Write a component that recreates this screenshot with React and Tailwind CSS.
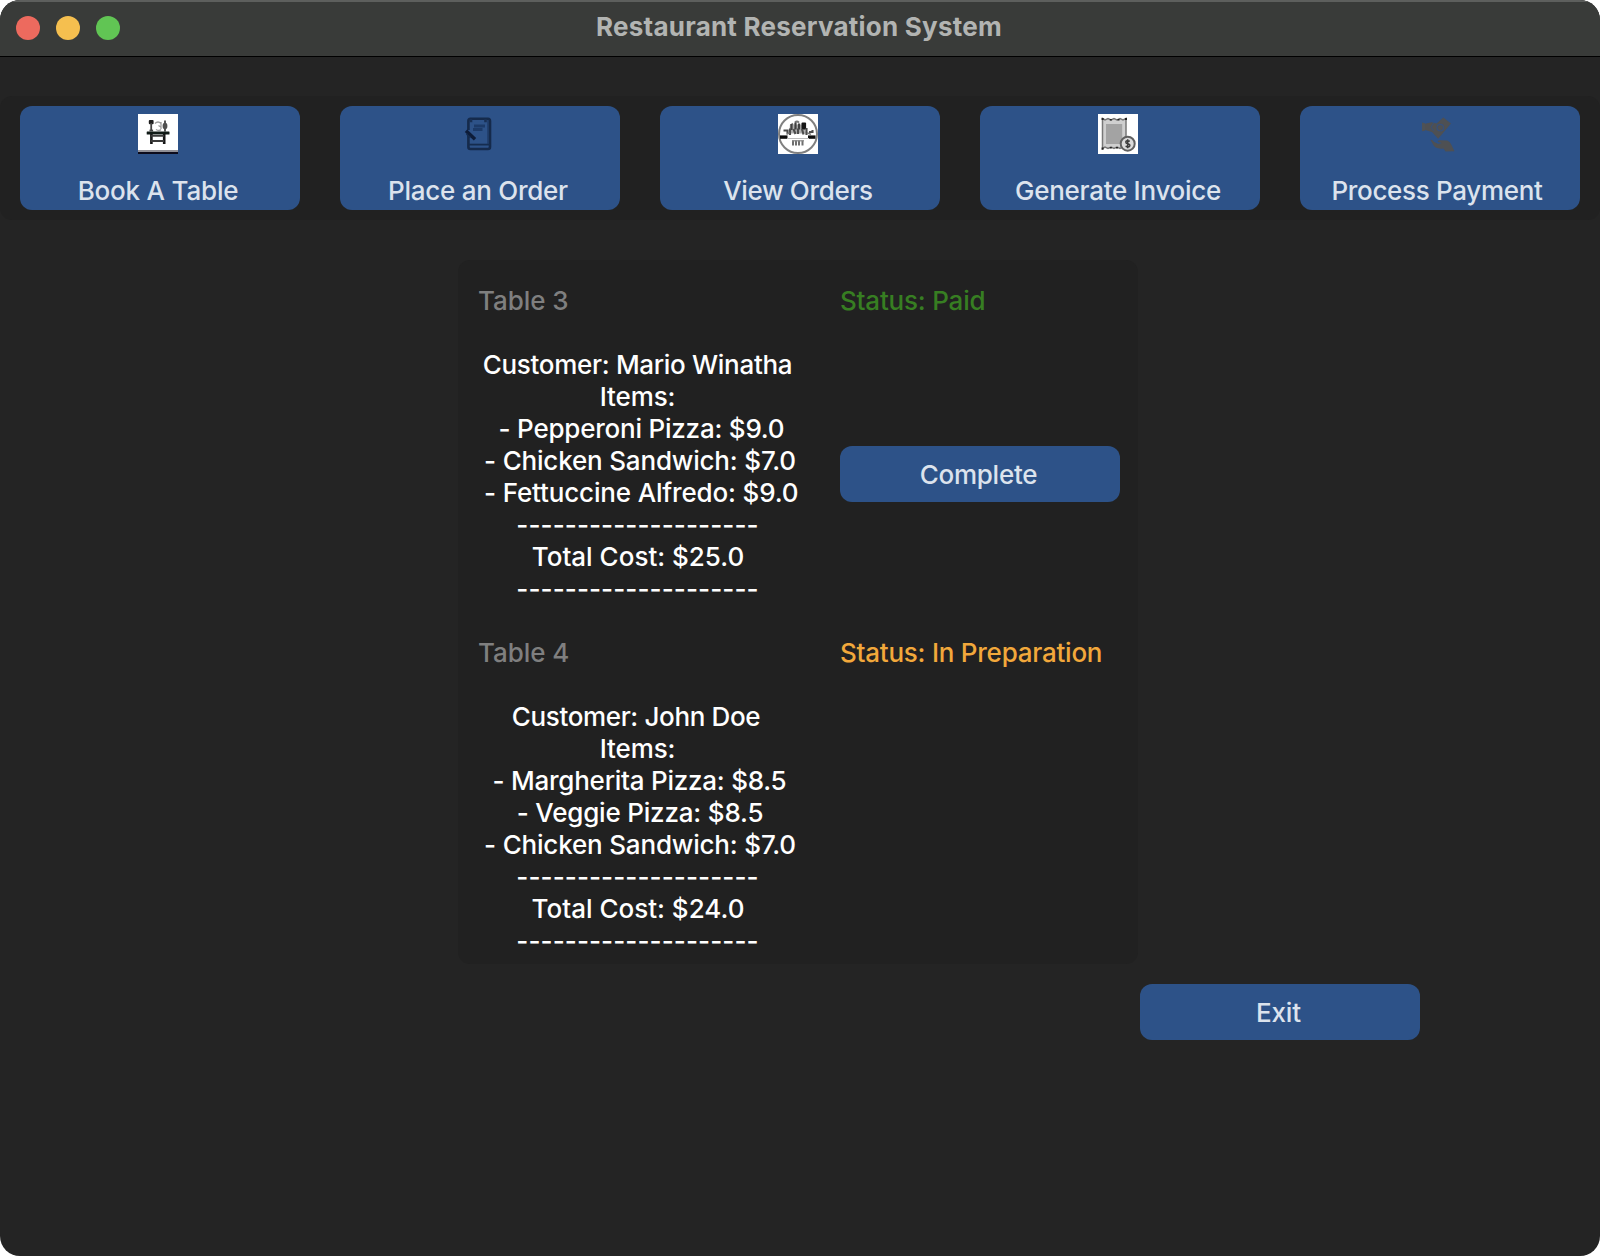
function TableIcon() {
  return (
    <svg width="40" height="40" viewBox="0 0 40 40">
      <rect width="40" height="40" fill="#fff" />
      <rect y="36" width="40" height="2" fill="#8f8f96" />
      <rect y="38" width="40" height="2" fill="#0c0b1c" />
      <g className="blur-[0.5px]">
        <rect x="10.8" y="6" width="4.8" height="4.2" rx="1" fill="#1e1e1e" />
        <path d="M13.2 9v7" stroke="#444" strokeWidth="1.8" />
        <path d="M11.5 16.5h3.6" stroke="#444" strokeWidth="1.8" />
        <path d="M27 6.5v11" stroke="#444" strokeWidth="1.8" />
        <ellipse cx="27" cy="12" rx="2.4" ry="3.2" fill="#505050" />
        <path d="M17 9.5q3-3 6 0M23 8v7M18 15.5q3 2 5 0M20.5 11.5l3 2" stroke="#9d9d9d" strokeWidth="1.3" fill="none" />
        <rect x="8.700" y="17.500" width="22.800" height="3" rx="0.5" fill="#101a16" />
        <path d="M13.400 20v10M26.200 20v10" stroke="#161616" strokeWidth="2.600" />
        <path d="M13 21.800h13M13 27h13" stroke="#3a3a3a" strokeWidth="1.800" />
      </g>
    </svg>
  );
}

function OrderIcon() {
  return (
    <svg className="blur-[0.5px]" width="40" height="40" viewBox="0 0 40 40" fill="none">
      <path d="M10.400 16V7q0-2.200 2-2.200H30q2 0 2 2.200v26q0 2-2 2H12.400q-2 0-2-2V19" stroke="#152a4b" strokeWidth="2.600" />
      <path d="M11 30.600h21" stroke="#152c4f" strokeWidth="1.800" />
      <path d="M30 6v24" stroke="#1c365f" strokeWidth="1.200" />
      <path d="M13 5v3.200M27.500 5v3.200" stroke="#183055" strokeWidth="2.600" />
      <path d="M16 12h11M15 15.400h9.500" stroke="#1c3a68" strokeWidth="3" />
      <path d="M8 16.800l9 8.400" stroke="#0d1c38" strokeWidth="3.400" />
      <path d="M8.500 19.500q1 2.500 4 4" stroke="#152c4f" strokeWidth="1.600" />
    </svg>
  );
}

function MenuIcon() {
  return (
    <svg width="40" height="40" viewBox="0 0 40 40" fill="none">
      <rect width="40" height="40" fill="#fff" />
      <g className="blur-[0.5px]">
        <circle cx="20" cy="20" r="19" stroke="#808080" strokeWidth="2" />
        <rect x="2" y="21.400" width="7.500" height="3.400" fill="#0e0e0e" />
        <rect x="30" y="21.400" width="7.500" height="3.400" fill="#0e0e0e" />
        <path d="M9 24.500h22" stroke="#bbb" strokeWidth="1" />
        <path d="M12.500 12l2.500-2.500M17 8.400q2-1.800 4 .2" stroke="#777" strokeWidth="2" />
        <path d="M12 10.500h14l2 9H11z" fill="#b0b0b0" />
        <rect x="23.500" y="8.500" width="4.600" height="7" rx="1" fill="#161616" />
        <path d="M13.500 10v6M17.500 8.500v7M21 9.500v6" stroke="#404040" strokeWidth="2.200" />
        <path d="M5.500 16.500h4v3M12 14.500v6.500M15.500 15l2 5M20 14.500v5.500M24 15l1.500 5.500M28.500 14v7M31 18h3.500v-2" stroke="#4c4c4c" strokeWidth="2.100" />
        <path d="M8.500 20.200l3-1.400M29 18.800l4 1.600" stroke="#777" strokeWidth="1.500" />
        <path d="M15 26.500v5M18 26.500v5M21 26.500v5M24.500 26.500v5" stroke="#6f6f6f" strokeWidth="2" />
        <path d="M14 26.800h12" stroke="#888" strokeWidth="1.200" />
      </g>
    </svg>
  );
}

function InvoiceIcon() {
  return (
    <svg width="40" height="40" viewBox="0 0 40 40" fill="none">
      <rect width="40" height="40" fill="#fff" />
      <g className="blur-[0.5px]">
        <path d="M4.500 4.500l2.500 1.500 3-1.500 3 1.500 3-1.500 3 1.500 3-1.500 3 1.500 3-1.500v30l-3-1.500-3 1.500-3-1.500-3 1.500-3-1.500-3 1.500-3-1.500-2.500 1.500z" fill="#cfcfcf" stroke="#777" strokeWidth="1.500" />
        <path d="M4.600 4v2M12.800 5v1.600M20.500 5v1.600M28 4v2M4.600 33.500v2.200M12.800 33v1.600M19 33v1.600" stroke="#222" strokeWidth="2" />
        <rect x="8" y="10" width="16.200" height="20" fill="#a3a3a3" />
        <circle cx="29.700" cy="29.700" r="7" fill="#dadada" stroke="#606060" strokeWidth="2" />
        <path d="M31.800 27.300q-3.600-1.600-4 .6 0 1.400 2 1.800 2.200.5 2 2-.5 1.900-4.200.6M29.700 25.200v9" stroke="#3c3c3c" strokeWidth="1.500" />
      </g>
    </svg>
  );
}

function PaymentIcon() {
  return (
    <svg className="blur-[0.5px]" width="40" height="40" viewBox="0 0 40 40" fill="none">
      <path d="M4 8.500l3 .8v7.400l-3 .6z" fill="#4e5256" />
      <path d="M7 9.700l6.500-1.400 5 1.200 6.800-6L33 9.600 20.200 24.800 14 18l-7-2z" fill="#4e5053" />
      <circle cx="22.300" cy="13.600" r="3.300" stroke="#37507a" strokeWidth="1.200" />
      <path d="M15.500 9.200l-2.500 4 2.500 3.500" stroke="#37507a" strokeWidth="1" />
      <path d="M12.300 25.800q1.700-.6 4 2.200l3.500 1.700q2.500.3 4-.6l-4-1.400q-.6-1.300 1.500-1.500l8 .2q3 1.200 4.200 4.500l3 6.300-9 .4-2-3q-7 .4-9.500-2.600z" fill="#4e5053" />
    </svg>
  );
}

const actions = [
  { label: 'Book A Table', Icon: TableIcon, tracking: 'tracking-[-0.2px]' },
  { label: 'Place an Order', Icon: OrderIcon, tracking: 'tracking-[-0.26px]' },
  { label: 'View Orders', Icon: MenuIcon, tracking: 'tracking-[-0.33px]' },
  { label: 'Generate Invoice', Icon: InvoiceIcon, tracking: 'tracking-[-0.28px]' },
  { label: 'Process Payment', Icon: PaymentIcon, tracking: 'tracking-[-0.32px] pr-[2px]' },
];

const rule = { text: '--------------------', className: 'tracking-[0.1px]' };

const orders = [
  {
    table: 'Table 3',
    status: 'Status: Paid',
    statusClass: 'text-[#377e22] tracking-[-0.2px]',
    complete: true,
    lines: [
      { text: 'Customer: Mario Winatha', className: 'tracking-[-0.31px]' },
      { text: 'Items:', className: 'tracking-[-0.1px]' },
      { text: '- Pepperoni Pizza: $9.0', className: 'pl-[8px] tracking-[-0.22px]' },
      { text: '- Chicken Sandwich: $7.0', className: 'pl-[5px] tracking-[-0.18px]' },
      { text: '- Fettuccine Alfredo: $9.0', className: 'pl-[6px] tracking-[-0.15px]' },
      rule,
      { text: 'Total Cost: $25.0', className: 'pl-[1px] tracking-[0px]' },
      rule,
    ],
  },
  {
    table: 'Table 4',
    status: 'Status: In Preparation',
    statusClass: 'text-[#f2a83b] tracking-[-0.24px]',
    complete: false,
    lines: [
      { text: 'Customer: John Doe', className: 'pr-[3px] tracking-[-0.35px]' },
      { text: 'Items:', className: 'tracking-[-0.1px]' },
      { text: '- Margherita Pizza: $8.5', className: 'pl-[4px] tracking-[-0.25px]' },
      { text: '- Veggie Pizza: $8.5', className: 'pl-[5px] tracking-[-0.19px]' },
      { text: '- Chicken Sandwich: $7.0', className: 'pl-[5px] tracking-[-0.18px]' },
      rule,
      { text: 'Total Cost: $24.0', className: 'pl-[1px] tracking-[0px]' },
      rule,
    ],
  },
];

function Order({ order }) {
  return (
    <section className="grid grid-cols-[362px_280px] grid-rows-[32px_256px] gap-y-8">
      <h2 className="tracking-[-0.08px] text-[#7f7f7f]">{order.table}</h2>
      <p className={order.statusClass}>{order.status}</p>
      <div className="w-[319px] text-center whitespace-nowrap text-white">
        {order.lines.map((line, i) => (
          <p key={i} className={line.className}>{line.text}</p>
        ))}
      </div>
      <div className="flex h-[250px] items-center">
        {order.complete && (
          <button className="h-14 w-[280px] rounded-xl bg-[#2d5288] pt-[2px] pr-[3px] tracking-[-0.25px] text-[#dce3ed]">
            Complete
          </button>
        )}
      </div>
    </section>
  );
}

export default function App() {
  return (
    <div className="h-[1256px] w-[1600px] bg-white">
      <div className="flex h-full flex-col overflow-hidden rounded-[20px] bg-[#242424] font-['Inter',sans-serif] text-[26px] leading-8 font-[450]">
        <header className="grid h-[57px] shrink-0 grid-cols-[200px_1fr_200px] border-t-2 border-b border-t-[#5d5f5d] border-b-black bg-[#393b39]">
          <div className="flex gap-4 pt-[14px] pl-4">
            <span className="size-6 rounded-full bg-[#ed6a5e]" />
            <span className="size-6 rounded-full bg-[#f5bf4f]" />
            <span className="size-6 rounded-full bg-[#61c554]" />
          </div>
          <h1 className="pt-[9px] pr-[2px] text-center font-bold tracking-[0.23px] text-[#b2b4b2]">
            Restaurant Reservation System
          </h1>
        </header>

        <nav className="mt-[39px] flex h-[124px] shrink-0 justify-between rounded-xl bg-[#212121] px-5 py-[10px]">
          {actions.map(({ label, Icon, tracking }) => (
            <button
              key={label}
              className="flex h-[104px] w-[280px] flex-col items-center gap-[21px] rounded-xl bg-[#2d5288] pt-2 pr-1 text-[#dce3ed]"
            >
              <Icon />
              <span className={tracking}>{label}</span>
            </button>
          ))}
        </nav>

        <main className="mt-10 ml-[458px] flex h-[704px] w-[680px] shrink-0 flex-col gap-8 rounded-xl bg-[#212121] pt-[25px] pl-5">
          {orders.map((order) => (
            <Order key={order.table} order={order} />
          ))}
        </main>

        <button className="mt-5 ml-[1140px] h-14 w-[280px] shrink-0 rounded-xl bg-[#2d5288] pt-[2px] pr-[3px] tracking-[-0.1px] text-[#dce3ed]">
          Exit
        </button>
      </div>
    </div>
  );
}
